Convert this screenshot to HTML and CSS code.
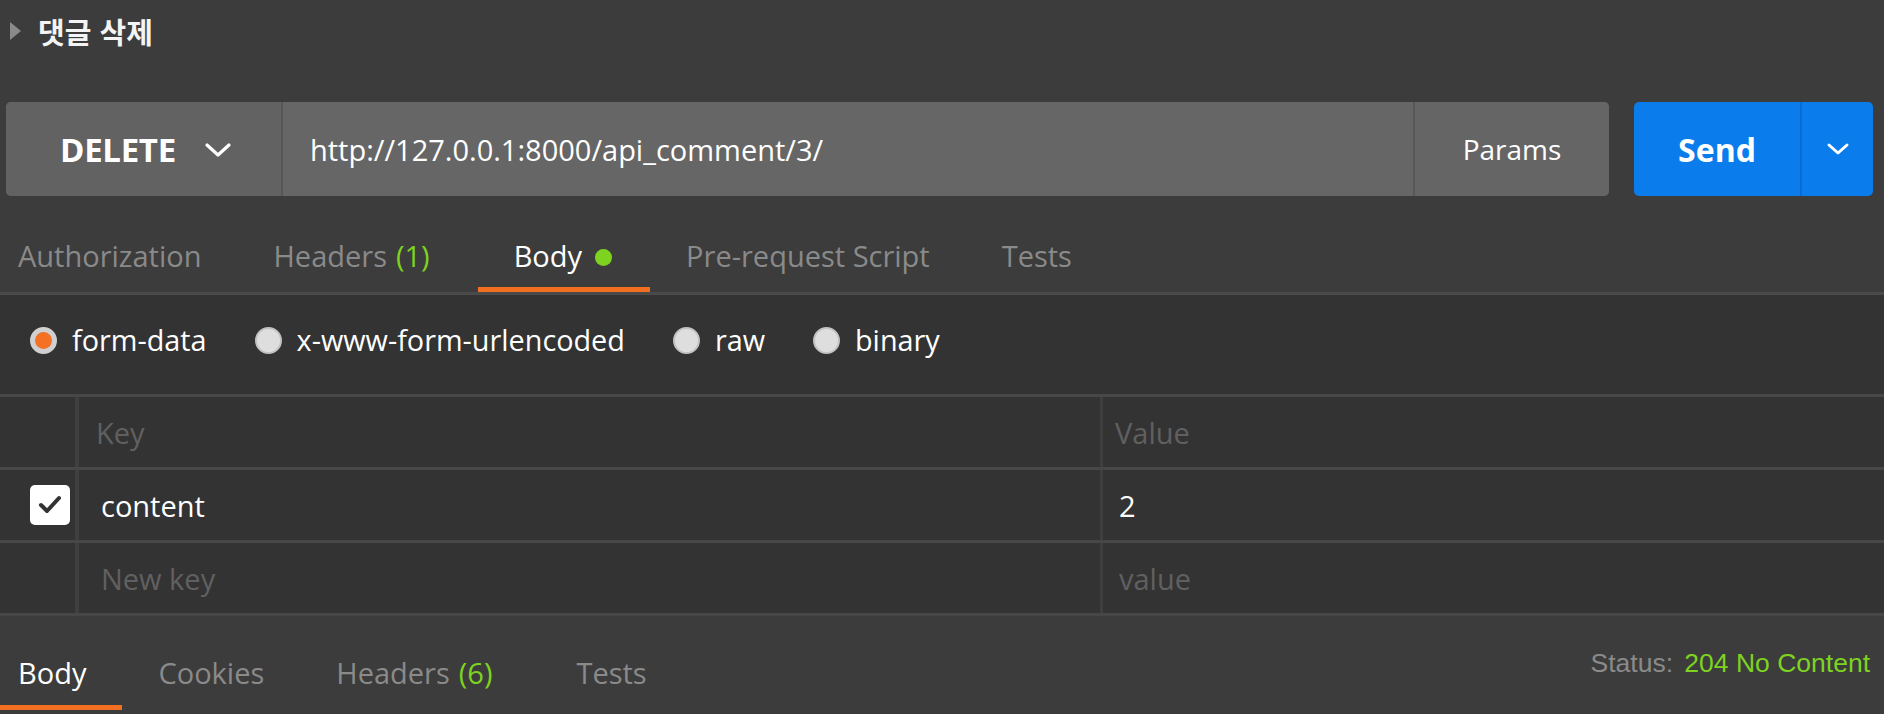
FILE: index.html
```html
<!DOCTYPE html>
<html lang="ko">
<head>
<meta charset="utf-8">
<title>댓글 삭제</title>
<link rel="stylesheet" href="styles.css">
</head>
<body>
<div class="page">
  <div class="title-row">
    <span class="caret"></span>
    <span class="title">댓글 삭제</span>
  </div>

  <div class="req-row">
    <div class="req-bar">
      <div class="method">
        <span class="method-name">DELETE</span>
        <svg class="chev" width="28" height="18" viewBox="0 0 28 18"><polyline points="3,4 14,14 25,4" fill="none" stroke="#ffffff" stroke-width="3.2" stroke-linecap="round" stroke-linejoin="round"/></svg>
      </div>
      <div class="url">http://127.0.0.1:8000/api_comment/3/</div>
      <div class="params">Params</div>
    </div>
    <div class="send">
      <span class="send-label">Send</span>
      <span class="send-more"><svg width="24" height="14" viewBox="0 0 24 14"><polyline points="3,3 12,11 21,3" fill="none" stroke="#ffffff" stroke-width="3" stroke-linecap="round" stroke-linejoin="round"/></svg></span>
    </div>
  </div>

  <div class="tabs req-tabs">
    <div class="tab first">Authorization</div>
    <div class="tab has-count">Headers <span class="count">(1)</span></div>
    <div class="tab active">Body <span class="dot"></span></div>
    <div class="tab">Pre-request Script</div>
    <div class="tab">Tests</div>
  </div>

  <div class="body-panel">
    <div class="radios">
      <label class="radio-item"><span class="radio on"></span>form-data</label>
      <label class="radio-item"><span class="radio"></span>x-www-form-urlencoded</label>
      <label class="radio-item"><span class="radio"></span>raw</label>
      <label class="radio-item"><span class="radio"></span>binary</label>
    </div>

    <div class="kv-table">
      <div class="kv-row head">
        <div class="c-check"></div>
        <div class="c-key placeholder">Key</div>
        <div class="c-val placeholder">Value</div>
      </div>
      <div class="kv-row">
        <div class="c-check"><span class="checkbox"><svg width="26" height="22" viewBox="0 0 26 22"><polyline points="4,11 10,17 22,4" fill="none" stroke="#333333" stroke-width="4" stroke-linecap="round" stroke-linejoin="round"/></svg></span></div>
        <div class="c-key value-text">content</div>
        <div class="c-val value-text">2</div>
      </div>
      <div class="kv-row">
        <div class="c-check"></div>
        <div class="c-key placeholder">New key</div>
        <div class="c-val placeholder">value</div>
      </div>
    </div>
  </div>

  <div class="resp-row">
    <div class="tabs resp-tabs">
      <div class="tab first active">Body</div>
      <div class="tab">Cookies</div>
      <div class="tab has-count">Headers <span class="count">(6)</span></div>
      <div class="tab">Tests</div>
    </div>
    <div class="status">Status: <span class="status-val">204 No Content</span></div>
  </div>
</div>
</body>
</html>
```

FILE: styles.css
```css
html, body {
  margin: 0;
  padding: 0;
  background: #3c3c3c;
}

.page {
  width: 1884px;
  height: 714px;
  overflow: hidden;
  font-family: "Open Sans", "Noto Sans", "Noto Sans CJK KR", sans-serif;
  color: #ffffff;
}

/* Title */
.title-row {
  height: 62px;
  display: flex;
  align-items: center;
  padding-left: 10px;
}

.caret {
  width: 0;
  height: 0;
  border-top: 9px solid transparent;
  border-bottom: 9px solid transparent;
  border-left: 11px solid #8a8a8a;
  margin-right: 17px;
}

.title {
  font-family: "Noto Sans CJK KR", "Noto Sans", sans-serif;
  font-weight: 700;
  font-size: 29px;
  color: #f4f4f4;
  line-height: 1;
}

/* Request bar */
.req-row {
  margin-top: 40px;
  height: 94px;
  display: flex;
  gap: 25px;
  padding: 0 11px 0 6px;
}

.req-bar {
  flex: 1;
  display: flex;
  background: #646464;
  border-radius: 5px;
  overflow: hidden;
}

.method {
  width: 277px;
  display: flex;
  align-items: center;
  padding-left: 54px;
  box-sizing: border-box;
  border-right: 2px solid #565656;
  background: #626262;
}

.method-name {
  font-weight: 700;
  font-size: 33px;
  letter-spacing: -0.3px;
  margin-right: 28px;
}

.chev {
  display: block;
  margin-top: 2px;
}

.url {
  flex: 1;
  display: flex;
  align-items: center;
  padding-left: 27px;
  font-size: 29px;
  background: #666666;
  border-right: 2px solid #575757;
}

.params {
  width: 194px;
  display: flex;
  align-items: center;
  justify-content: center;
  font-size: 28px;
  background: #656565;
}

.send {
  width: 239px;
  display: flex;
  background: #0a7cec;
  border-radius: 5px;
  overflow: hidden;
}

.send-label {
  flex: 1;
  display: flex;
  align-items: center;
  justify-content: center;
  font-weight: 700;
  font-size: 32px;
}

.send-more {
  width: 71px;
  display: flex;
  align-items: center;
  justify-content: center;
  border-left: 2px solid #0a6bd0;
}

.send-more svg {
  display: block;
}

/* Tabs */
.tabs {
  display: flex;
}

.tab {
  padding: 0 36px;
  font-size: 29px;
  line-height: 36px;
  color: #8a8a8a;
  border-bottom: 5px solid transparent;
  display: flex;
  align-items: center;
  white-space: nowrap;
}

.tab.first {
  padding-left: 18px;
}

.tab.has-count {
  padding-right: 48px;
}

.tab.active {
  color: #ffffff;
  border-bottom-color: #f26f21;
}

.req-tabs .tab.active {
  padding-right: 38px;
}

.count {
  color: #7ed321;
  margin-left: 9px;
}

.dot {
  width: 17px;
  height: 17px;
  border-radius: 50%;
  background: #7ed321;
  margin-left: 13px;
  margin-top: 3px;
}

.req-tabs {
  border-bottom: 3px solid #4a4a4a;
}

.req-tabs .tab {
  padding-top: 42px;
  padding-bottom: 13px;
}

/* Body panel */
.body-panel {
  background: #333333;
}

.radios {
  display: flex;
  align-items: center;
  gap: 48px;
  padding: 27px 0 36px 30px;
  height: 36px;
}

.radio-item {
  display: flex;
  align-items: center;
  font-size: 28.8px;
  line-height: 36px;
  color: #ffffff;
}

.radio {
  width: 27px;
  height: 27px;
  box-sizing: border-box;
  border-radius: 50%;
  background: #dedede;
  border: 2px solid #c2c2c2;
  margin-right: 15px;
}

.radio.on {
  background: #f47023;
  border: 5px solid #d0d0d0;
}

.kv-table {
  border-top: 3px solid #474747;
}

.kv-row {
  display: flex;
  height: 70px;
  border-bottom: 3px solid #474747;
}

.c-check {
  width: 79px;
  box-sizing: border-box;
  border-right: 4px solid #3f3f3f;
  display: flex;
  align-items: center;
  padding-left: 30px;
}

.c-key {
  width: 1024px;
  border-right: 3px solid #3f3f3f;
  display: flex;
  align-items: center;
  padding-left: 22px;
  box-sizing: border-box;
  font-size: 29px;
}

.c-val {
  flex: 1;
  display: flex;
  align-items: center;
  padding-left: 16px;
  font-size: 29px;
}

.head .c-key {
  padding-left: 17px;
}

.head .c-val {
  padding-left: 12px;
}

.placeholder {
  color: #606060;
}

.value-text {
  color: #ffffff;
}

.checkbox {
  width: 40px;
  height: 40px;
  border-radius: 5px;
  background: #ffffff;
  display: flex;
  align-items: center;
  justify-content: center;
}

.checkbox svg {
  display: block;
}

/* Response */
.resp-row {
  display: flex;
  justify-content: space-between;
  align-items: flex-start;
  height: 98px;
}

.resp-tabs .tab {
  padding-top: 39px;
  padding-bottom: 14px;
}

.status {
  font-family: "Liberation Sans", Arial, sans-serif;
  font-size: 26.5px;
  line-height: 30px;
  color: #8a8a8a;
  padding-top: 32px;
  padding-right: 14px;
}

.status-val {
  color: #7ed321;
  margin-left: 4px;
}
```
